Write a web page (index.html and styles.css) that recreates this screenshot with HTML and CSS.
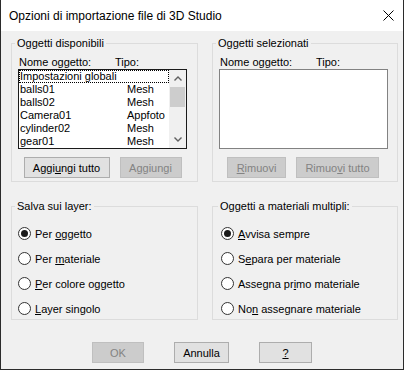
FILE: index.html
```html
<!DOCTYPE html>
<html lang="it">
<head>
    <meta charset="UTF-8">
    <meta name="viewport" content="width=device-width, initial-scale=1.0">
    <title>Opzioni di importazione file di 3D Studio</title>
    <link rel="stylesheet" href="styles.css">
</head>
<body>
<div class="dialog">
    <div class="titlebar">
        <span class="title">Opzioni di importazione file di 3D Studio</span>
        <svg class="close" width="11" height="11" viewBox="0 0 11 11">
            <path d="M0.5 0.5L10.5 10.5M10.5 0.5L0.5 10.5" stroke="#000" stroke-width="1" fill="none"/>
        </svg>
    </div>

    <div class="content">
        <div class="groups">
            <!-- oggetti disponibili -->
            <fieldset class="group list-group">
                <legend>Oggetti disponibili</legend>
                <div class="cols"><span>Nome oggetto:</span><span>Tipo:</span></div>
                <div class="listbox focused">
                    <div class="rows">
                        <div class="row current"><span>Impostazioni globali</span><span></span></div>
                        <div class="row"><span>balls01</span><span>Mesh</span></div>
                        <div class="row"><span>balls02</span><span>Mesh</span></div>
                        <div class="row"><span>Camera01</span><span>Appfoto</span></div>
                        <div class="row"><span>cylinder02</span><span>Mesh</span></div>
                        <div class="row"><span>gear01</span><span>Mesh</span></div>
                    </div>
                    <div class="scrollbar">
                        <div class="arrow">
                            <svg width="8" height="5" viewBox="0 0 8 5"><path d="M0.5 4.5L4 1L7.5 4.5" stroke="#606060" stroke-width="1.4" fill="none"/></svg>
                        </div>
                        <div class="track"><div class="thumb"></div></div>
                        <div class="arrow">
                            <svg width="8" height="5" viewBox="0 0 8 5"><path d="M0.5 0.5L4 4L7.5 0.5" stroke="#606060" stroke-width="1.4" fill="none"/></svg>
                        </div>
                    </div>
                </div>
                <div class="btns">
                    <button class="btn w86">Aggi<u>u</u>ngi tutto</button>
                    <button class="btn w62" disabled>A<u>g</u>giungi</button>
                </div>
            </fieldset>

            <!-- oggetti selezionati -->
            <fieldset class="group list-group">
                <legend>Oggetti selezionati</legend>
                <div class="cols"><span>Nome oggetto:</span><span>Tipo:</span></div>
                <div class="listbox"></div>
                <div class="btns">
                    <button class="btn w59" disabled><u>R</u>imuovi</button>
                    <button class="btn w83" disabled>Rimuo<u>v</u>i tutto</button>
                </div>
            </fieldset>

            <fieldset class="group radio-group">
                <legend>Salva sui layer:</legend>
                <div class="opt"><span class="radio checked"></span><span>Per <u>o</u>ggetto</span></div>
                <div class="opt"><span class="radio"></span><span>Per <u>m</u>ateriale</span></div>
                <div class="opt"><span class="radio"></span><span><u>P</u>er colore oggetto</span></div>
                <div class="opt"><span class="radio"></span><span><u>L</u>ayer singolo</span></div>
            </fieldset>

            <fieldset class="group radio-group right">
                <legend>Oggetti a materiali multipli:</legend>
                <div class="opt"><span class="radio checked"></span><span><u>A</u>vvisa sempre</span></div>
                <div class="opt"><span class="radio"></span><span>S<u>e</u>para per materiale</span></div>
                <div class="opt"><span class="radio"></span><span>Assegna pr<u>i</u>mo materiale</span></div>
                <div class="opt"><span class="radio"></span><span>No<u>n</u> assegnare materiale</span></div>
            </fieldset>
        </div>

        <div class="actions">
            <button class="btn w52" disabled>OK</button>
            <button class="btn w55">Annulla</button>
            <button class="btn w53"><u>?</u></button>
        </div>
    </div>
</div>
</body>
</html>
```

FILE: styles.css
```css
* {
    box-sizing: border-box;
}
body {
    margin: 0;
    font-family: "Liberation Sans", Arial, sans-serif;
    font-size: 11px;
    color: #000;
}
.dialog {
    width: 404px;
    height: 370px;
    background-color: #f0f0f0;
    border: 1px solid #2b2b2b;
    border-top: none;
    display: flex;
    flex-direction: column;
}
.titlebar {
    height: 31px;
    background-color: #fff;
    display: flex;
    align-items: center;
    justify-content: space-between;
    padding: 0 9px 0 8px;
}
.title {
    font-size: 12px;
    line-height: 14px;
}
.close {
    display: block;
}
.content {
    padding: 6px 0 0 10px;
}
.groups {
    display: grid;
    grid-template-columns: 187px 186px;
    column-gap: 14px;
    row-gap: 18px;
}
.group {
    margin: 0;
    min-width: 0;
    border: 1px solid #dcdcdc;
}
.group legend {
    padding: 0 2px;
    margin-left: -3px;
    line-height: 13px;
}
.list-group {
    padding: 6px 0 3px 6px;
}
.cols {
    display: grid;
    grid-template-columns: 96px auto;
    height: 13px;
    line-height: 13px;
    padding-left: 1px;
}
.listbox {
    width: 169px;
    height: 80px;
    background-color: #fff;
    border: 1px solid #828282;
    display: flex;
}
.listbox.focused {
    border-color: #1a1a1a;
}
.rows {
    flex: 1;
}
.row {
    display: grid;
    grid-template-columns: 107px auto;
    height: 13px;
    line-height: 13px;
    padding-left: 1px;
    white-space: nowrap;
}
.row.current {
    outline: 1px dotted #000;
    outline-offset: -1px;
}
.scrollbar {
    width: 17px;
    background-color: #f0f0f0;
    display: flex;
    flex-direction: column;
}
.arrow {
    height: 17px;
    display: flex;
    align-items: center;
    justify-content: center;
}
.track {
    flex: 1;
}
.thumb {
    height: 20px;
    margin: 0 1px;
    background-color: #cdcdcd;
}
.btns {
    display: flex;
    justify-content: center;
    gap: 10px;
    margin-top: 8px;
    padding-right: 10px;
}
.btn {
    height: 21px;
    padding: 0;
    font-family: inherit;
    font-size: 11px;
    color: #000;
    background-color: #e1e1e1;
    border: 1px solid #adadad;
}
.btn:disabled {
    color: #838383;
    background-color: #cccccc;
    border-color: #bfbfbf;
}
.w52 { width: 52px; }
.w53 { width: 53px; }
.w55 { width: 55px; }
.w59 { width: 59px; }
.w62 { width: 62px; }
.w83 { width: 83px; }
.w86 { width: 86px; }
.radio-group {
    padding: 12px 6px 2px 6px;
    display: flex;
    flex-direction: column;
    gap: 8px;
}
.radio-group.right {
    padding-left: 8px;
}
.opt {
    display: flex;
    align-items: center;
    gap: 4px;
    height: 17px;
}
.radio {
    width: 13px;
    height: 13px;
    border: 1px solid #333;
    border-radius: 50%;
    background-color: #fff;
    display: flex;
    align-items: center;
    justify-content: center;
}
.radio.checked::after {
    content: "";
    width: 7px;
    height: 7px;
    border-radius: 50%;
    background-color: #1a1a1a;
}
.actions {
    display: flex;
    justify-content: center;
    gap: 30px;
    margin-top: 22px;
    padding-right: 10px;
}
```
